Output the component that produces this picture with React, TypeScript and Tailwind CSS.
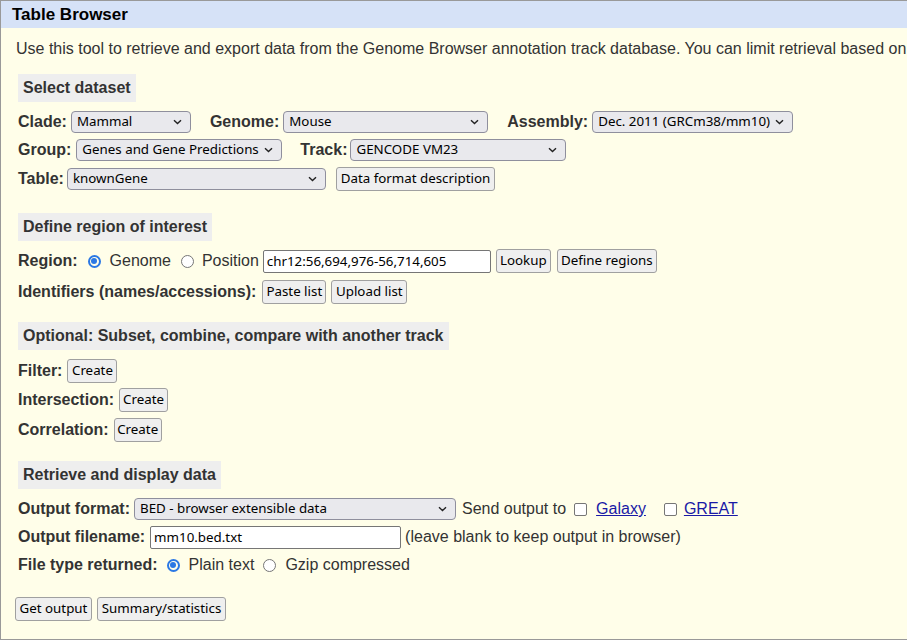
import React from "react";

const ctl = "font-['Noto_Sans',sans-serif] text-[13.33px] text-black";

const Chevron = () => (
  <svg width="9" height="6" viewBox="0 0 9 6" className="shrink-0 ml-[4px]">
    <path d="M1 1.2 L4.5 4.6 L8 1.2" fill="none" stroke="#222" strokeWidth="1.4" />
  </svg>
);

const Select = ({ value, w }: { value: string; w: string }) => (
  <div
    className={`${w} ${ctl} h-[22px] flex items-center justify-between pl-[5px] pr-[8px] bg-[#e9e9ed] border border-[#8f8f9d] rounded-[4px] shrink-0`}
  >
    <span className="whitespace-nowrap overflow-hidden">{value}</span>
    <Chevron />
  </div>
);

const Button = ({ children, w, cls = "" }: { children: React.ReactNode; w: string; cls?: string }) => (
  <button
    className={`${w} ${ctl} ${cls} h-[24px] flex items-center justify-center bg-[#efefef] border border-[#a0a0a0] rounded-[3px] whitespace-nowrap shrink-0`}
  >
    {children}
  </button>
);

const TextInput = ({ value, w }: { value: string; w: string }) => (
  <input
    readOnly
    value={value}
    className={`${w} ${ctl} h-[23px] px-[3px] bg-white border border-[#767676] rounded-[2px] shrink-0`}
  />
);

const Radio = ({ checked, cls = "" }: { checked?: boolean; cls?: string }) =>
  checked ? (
    <span className={`${cls} w-[13px] h-[13px] rounded-full border-[2px] border-[#2b78e4] flex items-center justify-center shrink-0`}>
      <span className="w-[6px] h-[6px] rounded-full bg-[#2b78e4]" />
    </span>
  ) : (
    <span className={`${cls} w-[13px] h-[13px] rounded-full border-[1.5px] border-[#767676] bg-white shrink-0`} />
  );

const Checkbox = ({ cls = "" }: { cls?: string }) => (
  <span className={`${cls} w-[13px] h-[13px] rounded-[2px] border-[1.5px] border-[#767676] bg-white shrink-0`} />
);

const Heading = ({ children, cls = "" }: { children: React.ReactNode; cls?: string }) => (
  <div className={`${cls} self-start h-[28px] leading-[28px] px-[5px] bg-[#eeeeee] font-bold whitespace-nowrap`}>
    {children}
  </div>
);

const Row = ({ children, cls = "" }: { children: React.ReactNode; cls?: string }) => (
  <div className={`${cls} h-[28px] flex items-center whitespace-nowrap`}>{children}</div>
);

const Label = ({ children, cls = "" }: { children: React.ReactNode; cls?: string }) => (
  <span className={`${cls} font-bold`}>{children}</span>
);

export default function App() {
  return (
    <div className="w-screen h-screen overflow-hidden bg-white">
      <div className="w-[1100px] border border-[#999999] bg-[#fffee9] text-[#333333] font-['Liberation_Sans',Arial,sans-serif] text-[16px]">
        <div className="h-[27px] bg-[#d6e2f7] px-[11px] pt-[1px] flex items-center font-bold text-[17px] text-black">
          Table Browser
        </div>
        <div className="flex flex-col pl-[17px] pb-[16px]">
          <div className="mt-[11px] ml-[-2px] leading-[20px] whitespace-nowrap">
            Use this tool to retrieve and export data from the Genome Browser annotation track database. You can limit retrieval based on
            data attributes and intersect or merge with data from another track, or retrieve DNA sequence covered by a track.
          </div>

          <Heading cls="mt-[15px]">Select dataset</Heading>
          <Row cls="mt-[6px]">
            <Label>Clade:</Label>
            <Select value="Mammal" w="ml-[4px] w-[120px]" />
            <Label cls="ml-[19px]">Genome:</Label>
            <Select value="Mouse" w="ml-[4px] w-[205px]" />
            <Label cls="ml-[19px]">Assembly:</Label>
            <Select value="Dec. 2011 (GRCm38/mm10)" w="ml-[4px] w-[201px]" />
          </Row>
          <Row>
            <Label>Group:</Label>
            <Select value="Genes and Gene Predictions" w="ml-[5px] w-[206px]" />
            <Label cls="ml-[18px]">Track:</Label>
            <Select value="GENCODE VM23" w="ml-[3px] w-[216px]" />
          </Row>
          <Row cls="mt-[1px]">
            <Label>Table:</Label>
            <Select value="knownGene" w="ml-[3px] w-[259px]" />
            <Button w="ml-[10px] w-[159px]">Data format description</Button>
          </Row>

          <Heading cls="mt-[20px]">Define region of interest</Heading>
          <Row cls="mt-[6px]">
            <Label>Region:</Label>
            <Radio checked cls="ml-[10px]" />
            <span className="ml-[9px]">Genome</span>
            <Radio cls="ml-[10px]" />
            <span className="ml-[8px]">Position</span>
            <TextInput value="chr12:56,694,976-56,714,605" w="ml-[4px] w-[228px]" />
            <Button w="ml-[5px] w-[55px]">Lookup</Button>
            <Button w="ml-[6px] w-[100px]">Define regions</Button>
          </Row>
          <Row cls="mt-[3px]">
            <Label>Identifiers (names/accessions):</Label>
            <Button w="ml-[6px] w-[64px]">Paste list</Button>
            <Button w="ml-[5px] w-[76px]">Upload list</Button>
          </Row>

          <Heading cls="mt-[16px]">Optional: Subset, combine, compare with another track</Heading>
          <Row cls="mt-[7px]">
            <Label>Filter:</Label>
            <Button w="ml-[5px] w-[50px]">Create</Button>
          </Row>
          <Row cls="mt-[1px]">
            <Label>Intersection:</Label>
            <Button w="ml-[5px] w-[49px]">Create</Button>
          </Row>
          <Row cls="mt-[2px]">
            <Label>Correlation:</Label>
            <Button w="ml-[5px] w-[48px]">Create</Button>
          </Row>

          <Heading cls="mt-[17px]">Retrieve and display data</Heading>
          <Row cls="mt-[6px]">
            <Label>Output format:</Label>
            <Select value="BED - browser extensible data" w="ml-[4px] w-[322px]" />
            <span className="ml-[6px]">Send output to</span>
            <Checkbox cls="ml-[8px]" />
            <a href="#" className="ml-[9px] text-[#1a1aa6] underline">Galaxy</a>
            <Checkbox cls="ml-[18px]" />
            <a href="#" className="ml-[7px] text-[#1a1aa6] underline">GREAT</a>
          </Row>
          <Row>
            <Label>Output filename:</Label>
            <TextInput value="mm10.bed.txt" w="ml-[5px] w-[251px]" />
            <span className="ml-[4px]">(leave blank to keep output in browser)</span>
          </Row>
          <Row>
            <Label>File type returned:</Label>
            <Radio checked cls="ml-[9px]" />
            <span className="ml-[9px]">Plain text</span>
            <Radio cls="ml-[9px]" />
            <span className="ml-[9px]">Gzip compressed</span>
          </Row>

          <Row cls="mt-[16px] ml-[-3px]">
            <Button w="w-[77px]">Get output</Button>
            <Button w="ml-[5px] w-[129px]">Summary/statistics</Button>
          </Row>
        </div>
      </div>
    </div>
  );
}
